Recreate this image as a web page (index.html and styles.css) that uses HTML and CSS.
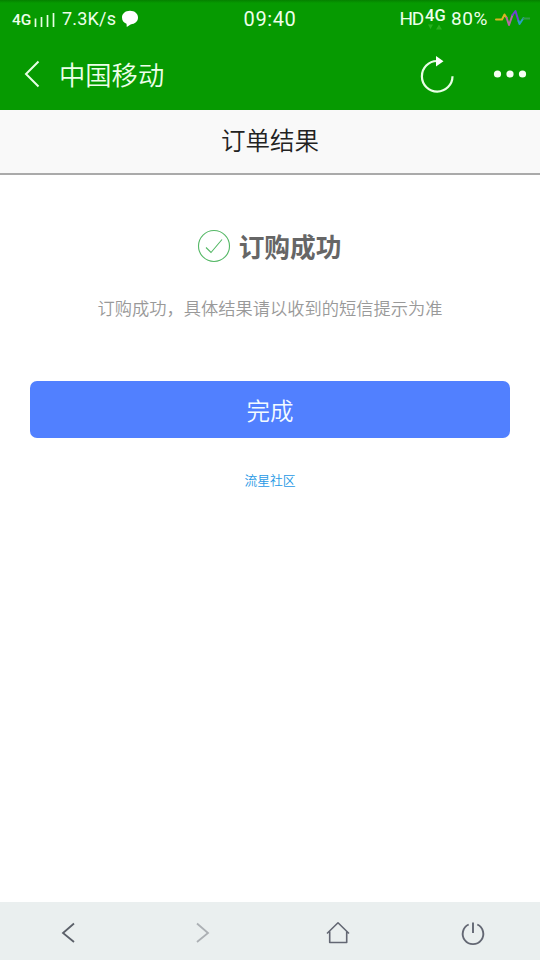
FILE: index.html
```html
<!DOCTYPE html>
<html lang="zh-CN">
<head>
<meta charset="utf-8">
<title>订单结果</title>
<link rel="stylesheet" href="styles.css">
</head>
<body>
<header class="top">
  <div class="status">
    <div class="status-left">
      <span class="net">4G</span>
      <svg class="signal" width="22" height="14" viewBox="0 0 22 14"><path d="M1.500 5.500V14M7.500 4V14M13.500 2V14M19.500 0V14" fill="none" stroke="#e6ffe2" stroke-width="1.700"/></svg>
      <span class="speed">7.3K/s</span>
      <svg class="bubble" width="18" height="18" viewBox="0 0 18 18"><path d="M9 .8C4.300.8 1 3.600 1 7.600c0 3.200 1.800 5.300 4.500 6.200L5.800 17l3.800-2.600c4.400-.2 7.400-2.900 7.400-6.800C17 3.600 13.700.8 9 .8z" fill="#fff"/></svg>
    </div>
    <span class="clock">09:40</span>
    <div class="status-right">
      <span class="hd">HD</span>
      <div class="cell"><span>4G</span><svg width="14" height="6" viewBox="0 0 14 6"><path d="M0 .5h5L2.500 5zM8 5.500h6L11 .5z" fill="#2aaf20"/></svg></div>
      <span class="battery">80%</span>
      <svg class="pulse" width="36" height="20" viewBox="0 0 36 20"><g fill="none" stroke-width="2" stroke-linejoin="round" stroke-linecap="round"><path d="M2 10.500h6l2.500-5 2 3" stroke="#d9b522"/><path d="M12.500 8.500l2.500 7.500 3.500-10" stroke="#b669a5"/><path d="M18.500 6L21.500 2l3 10" stroke="#7043d3"/><path d="M24.500 12l1 3 4-6" stroke="#2aa0c4"/><path d="M29.500 9.500h6" stroke="#319c46"/></g></svg>
    </div>
  </div>
  <div class="nav">
    <svg class="back" width="16" height="28" viewBox="0 0 16 28"><path d="M14.500 1.500L2 14l12.500 12.500" fill="none" stroke="#e8ffe5" stroke-width="2"/></svg>
    <span class="brand">中国移动</span>
    <svg class="reload" width="36" height="40" viewBox="0 0 36 40"><path d="M17 7A15.300 15.300 0 1 0 32.500 22.300" fill="none" stroke="#e8ffe5" stroke-width="2.200"/><path d="M16 2v10.500l7.500-5.300z" fill="#fff"/></svg>
    <svg class="more" width="34" height="10" viewBox="0 0 34 10"><g fill="#f5fff3"><circle cx="4.500" cy="5" r="3.600"/><circle cx="17" cy="5" r="3.600"/><circle cx="29.500" cy="5" r="3.600"/></g></svg>
  </div>
</header>
<h1 class="title">订单结果</h1>
<main class="content">
  <div class="result">
    <svg width="34" height="34" viewBox="0 0 34 34"><g fill="none" stroke="#55b866" stroke-width="1.100"><circle cx="17" cy="17" r="15.500"/><path d="M9 18.500l5 5L25 10.500"/></g></svg>
    <h2>订购成功</h2>
  </div>
  <p class="note">订购成功，具体结果请以收到的短信提示为准</p>
  <button class="done">完成</button>
  <a class="community">流星社区</a>
</main>
<footer class="toolbar">
  <svg width="28" height="28" viewBox="0 0 28 28"><path d="M20 4.500L9 14l11 9" fill="none" stroke="#5b6069" stroke-width="1.800"/></svg>
  <svg width="28" height="28" viewBox="0 0 28 28"><path d="M8 4.500L19 14 8 23" fill="none" stroke="#acb0b4" stroke-width="1.800"/></svg>
  <svg width="28" height="28" viewBox="0 0 28 28"><path d="M3 14.500L14 3.800l11 10.700M5.700 12.500v11h17v-11" fill="none" stroke="#636773" stroke-width="1.600" stroke-linejoin="round"/></svg>
  <svg width="28" height="28" viewBox="0 0 28 28"><path d="M9.700 5.500a10.300 10.300 0 1 0 8.600 0M14 3.500v10.500" fill="none" stroke="#636773" stroke-width="1.900"/></svg>
</footer>
</body>
</html>
```
FILE: styles.css
```css
* { box-sizing: border-box; }
body {
  margin: 0;
  height: 960px;
  display: flex;
  flex-direction: column;
  overflow: hidden;
  background: #fff;
  font-family: Roboto, "Noto Sans CJK SC", sans-serif;
}
svg { display: block; flex: none; }
.top { height: 110px; background: #069a01; color: #edffea; }
.status {
  height: 38px;
  padding: 0 9px 0 12px;
  display: grid;
  grid-template-columns: 1fr 56px 1fr;
  align-items: center;
  white-space: nowrap;
  line-height: 22px;
  background: linear-gradient(#058000, #069a01 3px);
}
.status-left, .status-right { display: flex; align-items: center; }
.status-right { justify-content: flex-end; }
.net { width: 20px; font-size: 15.500px; font-weight: 500; margin: 2px 2px 0 0; }
.signal { margin-top: 1px; }
.speed { width: 54px; margin-left: 6px; font-size: 18px; letter-spacing: .2px; }
.bubble { margin: -1px 0 0 5px; }
.clock { margin: 0 0 1px -3px; font-size: 20px; letter-spacing: .6px; text-align: center; }
.hd { font-size: 19px; letter-spacing: -1.200px; }
.cell { width: 22px; margin: -7px 4px 0 2px; font-size: 16.500px; font-weight: 500; line-height: 15px; }
.cell span { display: block; }
.cell svg { margin: 1px 0 -7px 3px; }
.battery { width: 40px; font-size: 19px; letter-spacing: .6px; }
.pulse { margin-left: 3px; margin-right: 1px; }
.nav { height: 72px; display: flex; align-items: center; padding: 0 13px 0 24px; }
.brand {
  margin: 4px auto 0 19px;
  font-size: 26.300px;
  font-weight: 350;
  line-height: 38px;
}
.reload { margin: 0 37px 0 0; }
.title {
  margin: 0;
  height: 65px;
  padding-top: 1px;
  border-bottom: 2px solid #aaa;
  background: #f9f9f9;
  color: #222;
  text-align: center;
  font-size: 24.500px;
  font-weight: 350;
  line-height: 62px;
}
.content { flex: 1; display: flex; flex-direction: column; align-items: center; padding: 54px 30px 0; }
.result { height: 34px; margin-right: 2px; display: flex; align-items: center; gap: 8px; }
.result h2 { margin: 3px 0 0; color: #666; font-size: 25.700px; font-weight: 700; line-height: 34px; }
.note { margin: 33px 0 0; color: #999; font-size: 17.250px; font-weight: 350; line-height: 26px; white-space: nowrap; }
.done {
  width: 100%;
  height: 57px;
  margin: 59px 0 0;
  padding: 1px 0 0;
  border: 0;
  border-radius: 7px;
  background: #5180ff;
  color: #f3fbff;
  font-family: inherit;
  font-size: 23.500px;
  font-weight: 350;
}
.community { margin-top: 33px; color: #2799e5; font-size: 12.800px; font-weight: 350; line-height: 20px; }
.toolbar {
  height: 58px;
  padding-top: 3px;
  display: grid;
  grid-template-columns: repeat(4, 1fr);
  place-items: center;
  background: #eaefef;
}
```
